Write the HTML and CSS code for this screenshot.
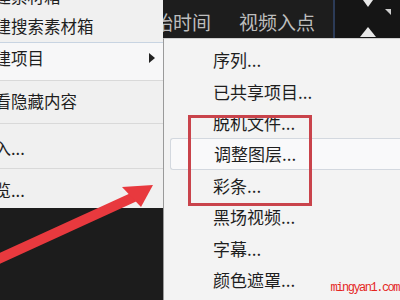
FILE: index.html
```html
<!DOCTYPE html>
<html lang="zh-CN">
<head>
    <meta charset="UTF-8">
    <meta name="viewport" content="width=device-width, initial-scale=1.0">
    <title>新建项目菜单</title>
    <link rel="stylesheet" href="styles.css">
</head>
<body>
    <div class="stage">
        <!-- timeline panel behind the menus -->
        <div class="timeline-head">
            <div class="col col-start"><span>开始时间</span></div>
            <div class="col col-in"><span>视频入点</span></div>
            <div class="side-tools">
                <svg width="65" height="38" viewBox="0 0 65 38">
                    <path d="M28 0 L38 0 L33 7 Z" fill="#e8e8e8"/>
                    <path d="M50 9 L56 9 L56 15 Z" fill="#cfcfcf"/>
                    <path d="M33 27 L41 37 L25 37 Z" fill="#e8e8e8"/>
                </svg>
            </div>
        </div>

        <div class="menu">
            <div class="menu-item item-first"><span class="label">新建素材箱</span></div>
            <div class="menu-item item-search"><span class="label">新建搜索素材箱</span></div>
            <div class="menu-item item-project is-open">
                <span class="label">新建项目</span>
                <span class="caret"></span>
            </div>
            <div class="menu-item item-hidden"><span class="label">查看隐藏内容</span></div>
            <div class="menu-item item-import"><span class="label">导入...</span></div>
            <div class="menu-item item-browse"><span class="label">浏览...</span></div>
        </div>

        <div class="submenu">
            <div class="sub-item">序列...</div>
            <div class="sub-item">已共享项目...</div>
            <div class="sub-item">脱机文件...</div>
            <div class="sub-item is-hover">调整图层...</div>
            <div class="sub-item">彩条...</div>
            <div class="sub-item">黑场视频...</div>
            <div class="sub-item">字幕...</div>
            <div class="sub-item">颜色遮罩...</div>
        </div>

        <!-- annotation drawn on top of the screenshot -->
        <div class="mark-box"></div>
        <svg class="mark-arrow" width="160" height="100" viewBox="0 180 160 100">
            <line x1="-6" y1="261" x2="134" y2="197" stroke="#e8393e" stroke-width="10"/>
            <polygon points="153,185 122,187 141,207" fill="#e8393e"/>
        </svg>

        <div class="watermark">mingyan1.com</div>
    </div>
</body>
</html>
```

FILE: styles.css
```css
:root {
    --panel-dark: #1d1d1d;
    --menu-bg: #f0f0f0;
    --menu-line: #d9d9d9;
    --menu-text: #1e1e1e;
    --mark-red: #c9434b;
}

* {
    margin: 0;
    padding: 0;
    box-sizing: border-box;
    font-family: "Noto Sans CJK SC", "Noto Sans", sans-serif;
}

body {
    background-color: #1b1b1b;
    width: 400px;
    height: 300px;
    overflow: hidden;
}

.stage {
    position: relative;
    width: 400px;
    height: 300px;
    overflow: hidden;
    background-color: #1c1c1c;
}

.timeline-head {
    display: flex;
    height: 38px;
    padding-left: 163px;
    background-color: var(--panel-dark);
    color: #bdbdbd;
    font-size: 19px;
}

.col {
    display: flex;
    align-items: center;
    overflow: hidden;
    white-space: nowrap;
    padding-top: 4px;
}

.col-start {
    width: 77px;
}

.col-start span {
    margin-left: -28px;
}

.col-in {
    width: 95px;
}

.side-tools {
    flex: 1;
    background-color: #151515;
    border-left: 2px solid #2c3b57;
}

.side-tools svg {
    display: block;
}

/* left context menu */
.menu {
    position: absolute;
    left: 0;
    top: -18px;
    width: 163px;
    height: 226px;
    background-color: var(--menu-bg);
    display: flex;
    flex-direction: column;
    font-size: 16.5px;
    color: var(--menu-text);
}

.menu-item {
    position: relative;
    display: flex;
    align-items: center;
    white-space: nowrap;
    overflow: hidden;
    border-bottom: 1px solid var(--menu-line);
}

.menu-item .label {
    margin-left: -22px;
}

.item-first {
    height: 28px;
    border-bottom: none;
}

.item-search {
    height: 33px;
    border-bottom-color: #c8d4e2;
}

.item-project {
    height: 38px;
    padding-bottom: 8px;
}

.item-hidden {
    height: 43px;
    padding-bottom: 3px;
}

.item-import {
    height: 45px;
    padding-top: 3px;
}

.item-browse {
    flex: 1;
    border-bottom: none;
    padding-top: 3px;
}

.is-open {
    background-color: #f7f7f8;
}

.caret {
    position: absolute;
    right: 8px;
    top: 10px;
    width: 0;
    height: 0;
    border-top: 5px solid transparent;
    border-bottom: 5px solid transparent;
    border-left: 6px solid #222;
}

/* submenu */
.submenu {
    position: absolute;
    left: 163px;
    top: 38px;
    right: 0;
    bottom: 0;
    background-color: #f3f3f3;
    border-left: 1px solid #9a9a9a;
    border-top: 1px solid #cfcfcf;
    padding-top: 5px;
    font-size: 17px;
    color: var(--menu-text);
}

.sub-item {
    height: 31.4px;
    display: flex;
    align-items: center;
    padding-left: 49px;
    white-space: nowrap;
}

.sub-item.is-hover {
    margin-left: 6px;
    padding-left: 43px;
    background-color: #f9f9fa;
    border: 1px solid #d3d8df;
    border-right: none;
    border-radius: 3px 0 0 3px;
}

/* annotation */
.mark-box {
    position: absolute;
    left: 188px;
    top: 115px;
    width: 124px;
    height: 91px;
    border: 3px solid var(--mark-red);
}

.mark-arrow {
    position: absolute;
    left: 0;
    top: 180px;
}

.watermark {
    position: absolute;
    right: 1px;
    bottom: 5px;
    font-family: "Liberation Mono", monospace;
    font-size: 12px;
    letter-spacing: -1.5px;
    color: #e5261f;
}
```
